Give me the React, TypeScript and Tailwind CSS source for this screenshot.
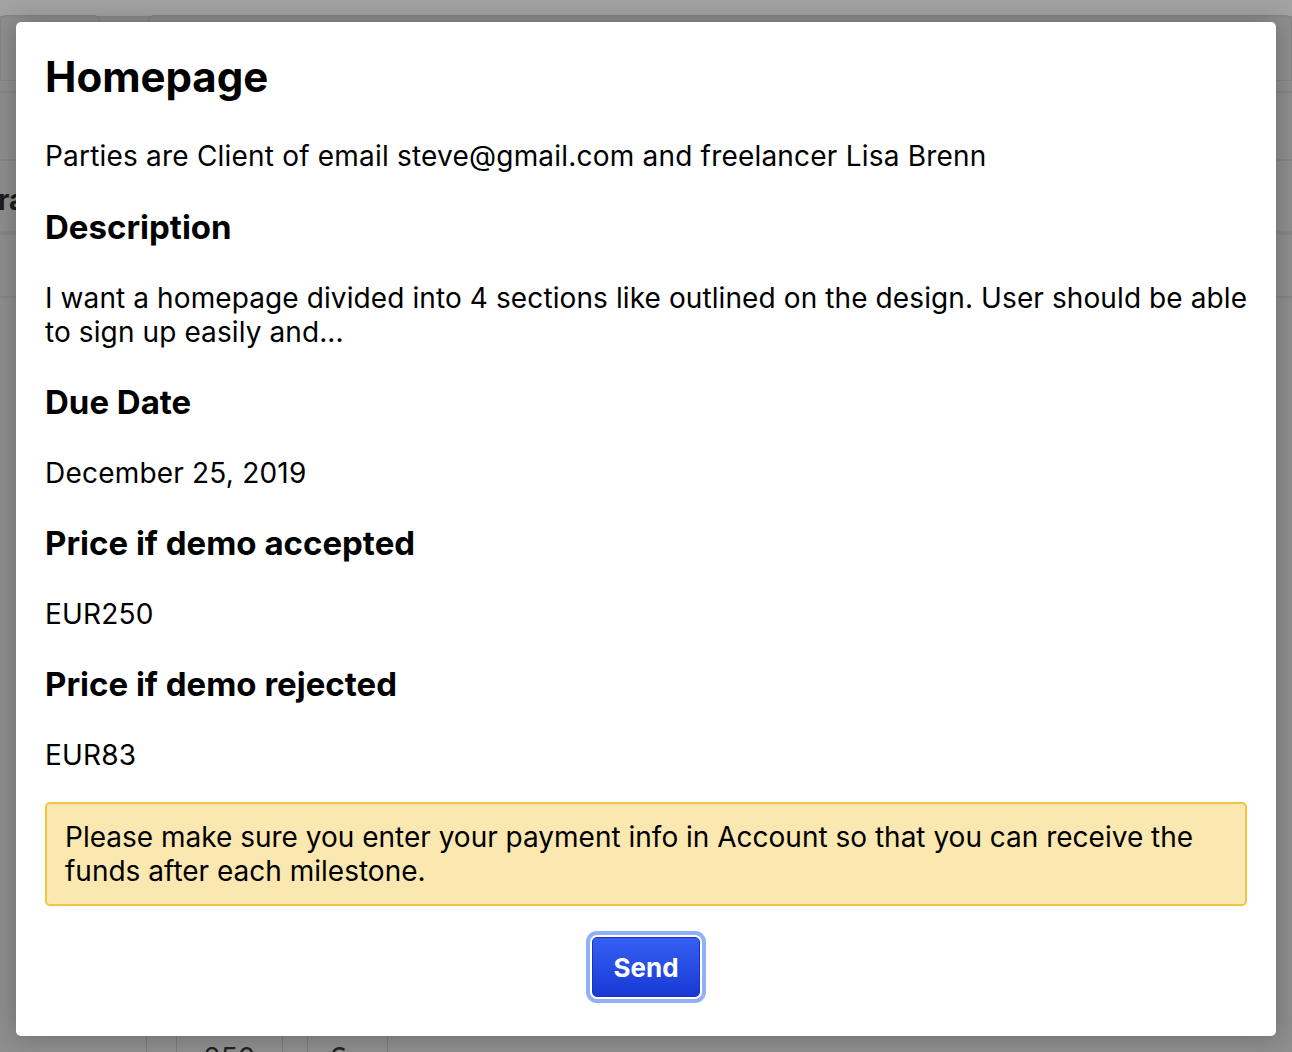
import React from "react";

const font = { fontFamily: "Inter, 'Noto Sans', sans-serif" };

function Backdrop() {
	return (
		<div className="absolute inset-0 overflow-hidden bg-[#8e8e8e]">
			<div className="h-[18px] bg-[#a2a2a2] border-b-2 border-[#8a8a8a]" />
			<div className="flex gap-[48px] -mt-[3px]">
				<div className="w-[100px] h-[66px] rounded-t-md border border-[#848484]" />
				<div className="flex-1 h-[66px] rounded-t-md border border-[#848484]" />
			</div>
			<div className="flex flex-col">
				<div className="h-[12px] border-b-2 border-[#858585]" />
				<div className="h-[68px] border-b-2 border-[#858585]" />
				<div className="h-[74px] border-b-4 border-[#878787] flex items-center pt-[8px]">
					<span className="text-[28px] font-bold text-[#1c1c1c] -ml-[19px]">Tra</span>
				</div>
				<div className="h-[63px] border-b-2 border-[#858585]" />
			</div>
			<div className="absolute left-0 right-0 top-[1036px] h-[30px] flex">
				<div className="w-[147px] border-r border-[#7c7c7c]" />
				<div className="w-[30px] border-r border-[#7c7c7c]" />
				<div className="w-[106px] border-r border-[#7c7c7c] text-center text-[28px] text-[#222] leading-[40px] pt-[2px]">
					250
				</div>
				<div className="w-[25px] border-r border-[#7c7c7c]" />
				<div className="w-[80px] border-r border-[#7c7c7c] pl-[20px] text-[28px] text-[#222] leading-[40px] pt-[2px]">
					€
				</div>
			</div>
		</div>
	);
}

function Field({ title, value }: { title: string; value: string }) {
	return (
		<>
			<h3 className="mt-[33px] text-[33px] leading-[40px] font-bold">{title}</h3>
			<p className="mt-[34px] text-[28px] leading-[34px] tracking-[0.2px]">{value}</p>
		</>
	);
}

export default function App() {
	return (
		<div className="relative w-[1292px] h-[1052px] overflow-hidden" style={font}>
			<Backdrop />
			<div className="absolute left-[16px] top-[22px] w-[1260px] h-[1014px] bg-white rounded-[5px] shadow-[0_0_24px_rgba(0,0,0,0.25)] px-[29px] pt-[30px] text-black">
				<h1 className="text-[42px] leading-[50px] font-bold">Homepage</h1>
				<p className="mt-[37px] text-[28px] leading-[34px] tracking-[0.2px]">
					Parties are Client of email steve@gmail.com and freelancer Lisa Brenn
				</p>
				<h3 className="mt-[34px] text-[33px] leading-[40px] font-bold">Description</h3>
				<p className="mt-[34px] -mr-[14px] text-[28px] leading-[34px] tracking-[0.1px]">
					I want a homepage divided into 4 sections like outlined on the design. User should be able
					to sign up easily and...
				</p>
				<Field title="Due Date" value="December 25, 2019" />
				<Field title="Price if demo accepted" value="EUR250" />
				<Field title="Price if demo rejected" value="EUR83" />
				<div className="mt-[30px] rounded-[5px] border-2 border-[#f5c443] bg-[#fbe8b1] px-[18px] py-[16px] text-[28px] leading-[34px]">
					Please make sure you enter your payment info in Account so that you can receive the
					funds after each milestone.
				</div>
				<div className="flex justify-center mt-[31px]">
					<button
						type="button"
						className="w-[108px] h-[60px] rounded-[5px] border border-[#1b33b8] bg-gradient-to-b from-[#3560f5] to-[#1a38d4] text-white text-[26px] font-bold ring-4 ring-[#90b1f7] ring-offset-2 ring-offset-white"
					>
						Send
					</button>
				</div>
			</div>
		</div>
	);
}
